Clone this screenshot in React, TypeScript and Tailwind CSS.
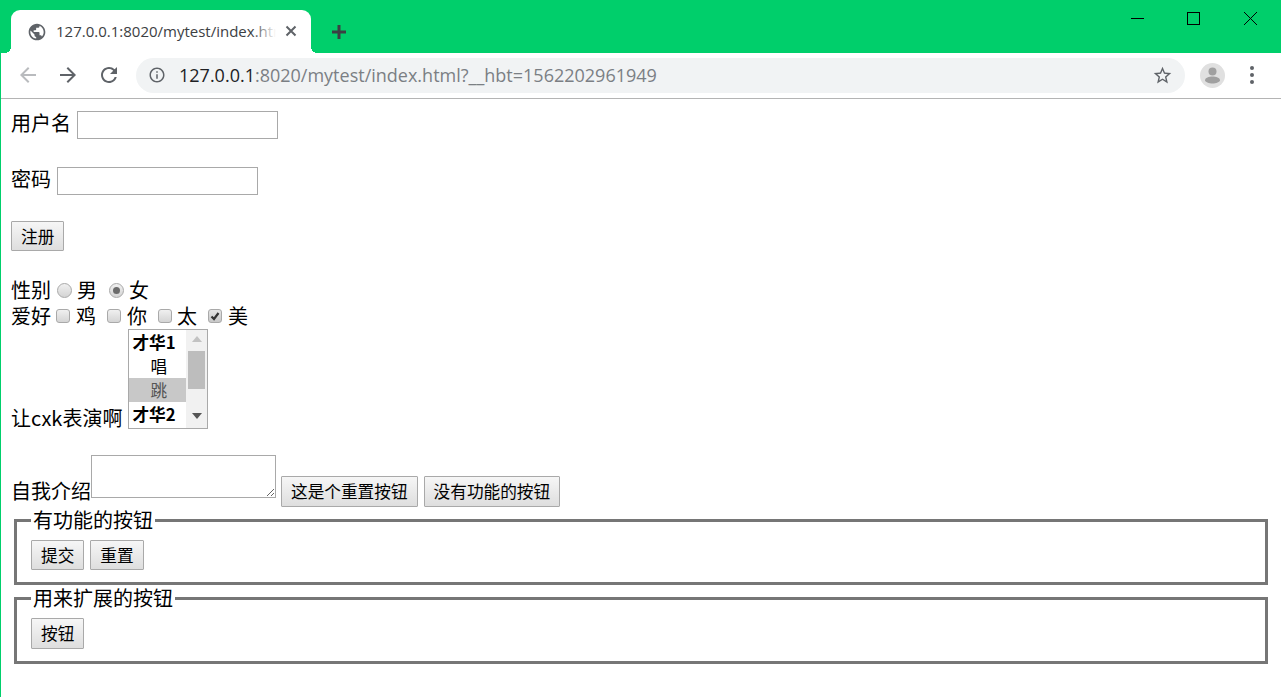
const CJK = { fontFamily: '"Noto Sans CJK SC", "Noto Sans", sans-serif' }

function FormButton({ children, tall }: { children: string; tall?: boolean }) {
  return (
    <button
      type="button"
      className={`${tall ? 'h-[31px]' : 'h-[30px]'} px-[9px] border border-[#a9a9a9] rounded-[1px] bg-linear-to-b from-[#f6f6f6] to-[#dedede] text-[16.67px] leading-none text-black whitespace-nowrap`}
    >
      {children}
    </button>
  )
}

function Radio({ checked }: { checked?: boolean }) {
  return (
    <span className="relative inline-flex w-[15px] h-[15px] items-center justify-center rounded-full border border-[#a9a9a9] bg-linear-to-b from-[#f0f0f0] to-[#d4d4d4]">
      {checked && <span className="w-[7px] h-[7px] rounded-full bg-[#6b6b6b]" />}
    </span>
  )
}

function Checkbox({ checked }: { checked?: boolean }) {
  return (
    <span className={`relative inline-flex w-[14px] h-[14px] items-center justify-center rounded-[3px] border border-[#a9a9a9] bg-linear-to-b ${checked ? 'from-[#e4e4e4] to-[#c8c8c8]' : 'from-[#f0f0f0] to-[#d4d4d4]'}`}>
      {checked && (
        <svg width="10" height="10" viewBox="0 0 10 10">
          <path d="M1.5 5.5 L4 8 L8.5 2" fill="none" stroke="#333" strokeWidth="2.2" />
        </svg>
      )}
    </span>
  )
}

function Option({ label, group, selected }: { label: string; group?: boolean; selected?: boolean }) {
  if (group) {
    return <div className="h-[24px] pl-[3px] leading-[24px] text-[16.67px] font-bold text-black">{label}</div>
  }
  return (
    <div className={`h-[24px] pl-[21px] leading-[24px] text-[16.67px] ${selected ? 'bg-[#c8c8c8] text-[#555]' : 'text-black'}`}>
      {label}
    </div>
  )
}

function Browser() {
  return (
    <>
      {/* title bar */}
      <div className="relative h-[53px] shrink-0 bg-[#00cf6b] pl-[11px] pt-[10px] flex">
        <div className="relative w-[300px] h-[43px] bg-white rounded-t-[9px] flex items-center pl-[16px]">
          <span className="absolute -left-[6px] bottom-0 w-[6px] h-[6px] bg-[radial-gradient(circle_at_0_0,#00cf6b_6px,#fff_6px)]" />
          <span className="absolute -right-[6px] bottom-0 w-[6px] h-[6px] bg-[radial-gradient(circle_at_100%_0,#00cf6b_6px,#fff_6px)]" />
          <svg width="20" height="20" viewBox="0 0 24 24" fill="#5f6368" className="shrink-0">
            <path d="M12 2C6.48 2 2 6.48 2 12s4.48 10 10 10 10-4.48 10-10S17.52 2 12 2zm-1 17.93c-3.95-.49-7-3.85-7-7.93 0-.62.08-1.21.21-1.79L9 15v1c0 1.1.9 2 2 2v1.93zm6.9-2.54c-.26-.81-1-1.39-1.9-1.39h-1v-3c0-.55-.45-1-1-1H8v-2h2c.55 0 1-.45 1-1V7h2c1.1 0 2-.9 2-2v-.41c2.93 1.19 5 4.06 5 7.41 0 2.08-.8 3.97-2.1 5.39z" />
          </svg>
          <div className="relative ml-[9px] w-[220px] overflow-hidden whitespace-nowrap text-[15px] text-[#3c4043]" style={{ fontFamily: '"Open Sans", sans-serif' }}>
            127.0.0.1:8020/mytest/index.html
            <span className="absolute right-0 top-0 bottom-0 w-[24px] bg-linear-to-r from-transparent to-white" />
          </div>
          <svg width="12" height="12" viewBox="0 0 12 12" className="absolute left-[274px] top-[15px]">
            <path d="M1.5 1.5 L10.5 10.5 M10.5 1.5 L1.5 10.5" stroke="#5f6368" strokeWidth="2" />
          </svg>
        </div>
        <svg width="16" height="16" viewBox="0 0 16 16" className="ml-[20px] mt-[14px]">
          <path d="M8 1 V15 M1 8 H15" stroke="#3c4043" strokeWidth="3" />
        </svg>
        {/* window controls */}
        <div className="absolute right-[24px] top-[12px] flex items-start">
          <span className="mt-[6px] w-[13px] h-[1px] bg-black" />
          <span className="ml-[43px] w-[13px] h-[13px] border border-black" />
          <svg width="13" height="13" viewBox="0 0 13 13" className="ml-[44px]">
            <path d="M0 0 L13 13 M13 0 L0 13" stroke="#000" strokeWidth="1" />
          </svg>
        </div>
      </div>
      {/* toolbar */}
      <div className="h-[46px] shrink-0 bg-white border-b border-[#b4b4b4] flex items-center pb-[1px] pl-[16px] pr-[15px]">
        <svg width="24" height="24" viewBox="0 0 24 24" fill="#b9bbbe" className="shrink-0">
          <path d="M20 11H7.83l5.59-5.59L12 4l-8 8 8 8 1.41-1.41L7.83 13H20v-2z" />
        </svg>
        <svg width="24" height="24" viewBox="0 0 24 24" fill="#5f6368" className="ml-[16px] shrink-0">
          <path d="M12 4l-1.41 1.41L16.17 11H4v2h12.17l-5.58 5.59L12 20l8-8z" />
        </svg>
        <svg width="24" height="24" viewBox="0 0 24 24" fill="#5f6368" className="ml-[17px] shrink-0">
          <path d="M17.65 6.35A7.958 7.958 0 0 0 12 4c-4.42 0-7.99 3.58-7.99 8s3.57 8 7.99 8c3.73 0 6.84-2.55 7.73-6h-2.08A5.99 5.99 0 0 1 12 18c-3.31 0-6-2.69-6-6s2.69-6 6-6c1.66 0 3.14.69 4.22 1.78L13 11h7V4l-2.35 2.35z" />
        </svg>
        <div className="ml-[15px] w-[1049px] h-[35px] rounded-full bg-[#f1f3f4] flex items-center pl-[12px] pr-[12px]" style={{ fontFamily: '"Open Sans", sans-serif' }}>
          <svg width="18" height="18" viewBox="0 0 24 24" fill="#5f6368" className="shrink-0">
            <path d="M11 7h2v2h-2zm0 4h2v6h-2zm1-9C6.48 2 2 6.48 2 12s4.48 10 10 10 10-4.48 10-10S17.52 2 12 2zm0 18c-4.41 0-8-3.59-8-8s3.59-8 8-8 8 3.59 8 8-3.59 8-8 8z" />
          </svg>
          <div className="ml-[13px] text-[18px] text-[#7b7f84] whitespace-nowrap">
            <span className="text-[#202124]">127.0.0.1</span>:8020/mytest/index.html?__hbt=1562202961949
          </div>
          <svg width="21" height="21" viewBox="0 0 24 24" fill="#5f6368" className="ml-auto shrink-0">
            <path d="M22 9.24l-7.19-.62L12 2 9.19 8.63 2 9.24l5.46 4.73L5.82 21 12 17.27 18.18 21l-1.63-7.03L22 9.24zM12 15.4l-3.76 2.27 1-4.28-3.32-2.88 4.38-.38L12 6.1l1.71 4.04 4.38.38-3.32 2.88 1 4.28L12 15.4z" />
          </svg>
        </div>
        <div className="ml-[15px] w-[25px] h-[25px] rounded-full bg-[#e0e0e0] shrink-0 flex items-center justify-center">
          <svg width="25" height="25" viewBox="0 0 25 25" fill="#a0a0a0">
            <circle cx="12.5" cy="8.5" r="4" />
            <path d="M5 17.5 C5 14.5 9 13.5 12.5 13.5 S20 14.5 20 17.5 C20 19 16 20.5 12.5 20.5 S5 19 5 17.5 Z" />
          </svg>
        </div>
        <div className="ml-[25px] flex flex-col gap-[3px] shrink-0">
          <span className="w-[4px] h-[4px] rounded-full bg-[#5f6368]" />
          <span className="w-[4px] h-[4px] rounded-full bg-[#5f6368]" />
          <span className="w-[4px] h-[4px] rounded-full bg-[#5f6368]" />
        </div>
      </div>
    </>
  )
}

export default function App() {
  return (
    <div className="w-[1281px] h-[697px] overflow-hidden bg-white flex flex-col border-l border-[#00cf6b]">
      <div className="-ml-px flex flex-col">
        <Browser />
      </div>
      <form className="pl-[10px] text-[20px] leading-[28px] text-black" style={CJK}>
        <div className="mt-[12px] h-[28px] flex items-center">
          <label className="mb-[4px]">用户名</label>
          <input type="text" className="ml-[6px] w-[201px] h-[28px] border border-[#a9a9a9] bg-white" />
        </div>
        <div className="mt-[28px] h-[28px] flex items-center">
          <label className="mb-[5px]">密码</label>
          <input type="password" className="ml-[6px] w-[201px] h-[28px] border border-[#a9a9a9] bg-white" />
        </div>
        <div className="mt-[26px] flex">
          <FormButton>注册</FormButton>
        </div>
        <div className="mt-[26px] h-[26px] flex items-center leading-[26px]">
          <span>性别</span>
          <span className="ml-[6px] flex"><Radio /></span>
          <span className="ml-[5px]">男</span>
          <span className="ml-[12px] flex"><Radio checked /></span>
          <span className="ml-[5px]">女</span>
        </div>
        <div className="h-[26px] flex items-center leading-[26px]">
          <span>爱好</span>
          <span className="ml-[5px] flex"><Checkbox /></span>
          <span className="ml-[6px]">鸡</span>
          <span className="ml-[11px] flex"><Checkbox /></span>
          <span className="ml-[6px]">你</span>
          <span className="ml-[11px] flex"><Checkbox /></span>
          <span className="ml-[5px]">太</span>
          <span className="ml-[11px] flex"><Checkbox checked /></span>
          <span className="ml-[6px]">美</span>
        </div>
        <div className="flex items-end">
          <label>让cxk表演啊</label>
          <div className="ml-[6px] mb-[3px] w-[80px] h-[100px] border border-[#a9a9a9] flex overflow-hidden">
            <div className="w-[57px] shrink-0">
              <Option label="才华1" group />
              <Option label="唱" />
              <Option label="跳" selected />
              <Option label="才华2" group />
            </div>
            <div className="flex-1 bg-[#f1f1f1] flex flex-col items-center pt-[6px]">
              <svg width="10" height="6" viewBox="0 0 10 6"><path d="M5 0 L10 6 H0 Z" fill="#c2c2c2" /></svg>
              <div className="mt-[9px] w-[17px] h-[38px] bg-[#bdbdbd]" />
              <svg width="10" height="6" viewBox="0 0 10 6" className="mt-[24px]"><path d="M0 0 H10 L5 6 Z" fill="#555" /></svg>
            </div>
          </div>
        </div>
        <div className="mt-[23px] flex items-end">
          <label className="mb-[2px]">自我介绍</label>
          <textarea className="mb-[9px] w-[185px] h-[43px] border border-[#a9a9a9] bg-white" />
          <div className="ml-[5px] flex gap-[6px]">
            <FormButton tall>这是个重置按钮</FormButton>
            <FormButton tall>没有功能的按钮</FormButton>
          </div>
        </div>
        <fieldset className="ml-[3px] -mt-px w-[1254px] border-[3px] border-[#767676] pl-[14px] pb-[12px]">
          <legend className="px-[2px] leading-[28px]">有功能的按钮</legend>
          <div className="mt-[6px] flex gap-[6px]">
            <FormButton>提交</FormButton>
            <FormButton>重置</FormButton>
          </div>
        </fieldset>
        <fieldset className="ml-[3px] -mt-px w-[1254px] border-[3px] border-[#767676] pl-[14px] pb-[12px]">
          <legend className="px-[2px] leading-[28px]">用来扩展的按钮</legend>
          <div className="mt-[6px] flex">
            <FormButton tall>按钮</FormButton>
          </div>
        </fieldset>
      </form>
    </div>
  )
}
